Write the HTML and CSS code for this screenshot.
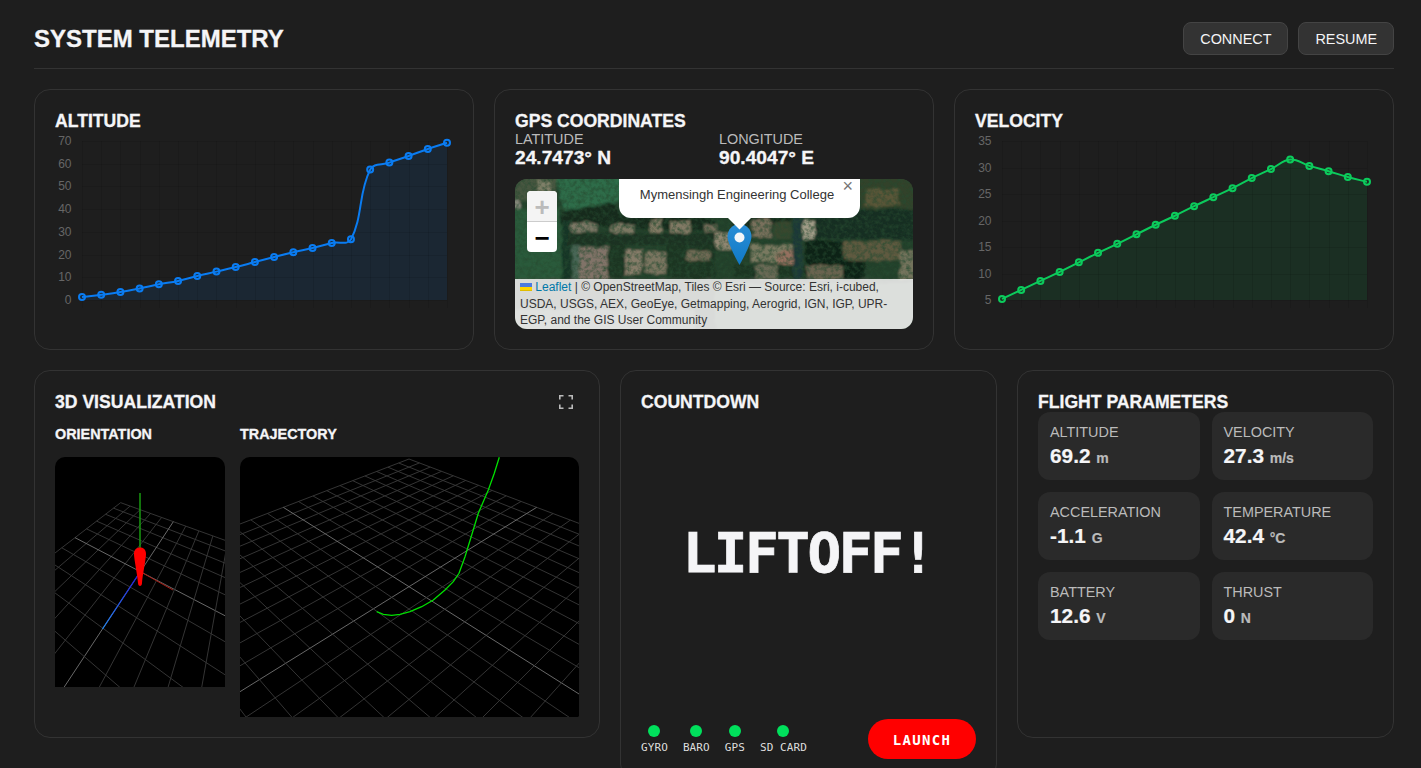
FILE: index.html
```html
<!DOCTYPE html>
<html lang="en">
<head>
    <meta charset="UTF-8">
    <title>System Telemetry</title>
    <link rel="stylesheet" href="styles.css">
</head>
<body>
    <header class="topbar">
        <h1>SYSTEM TELEMETRY</h1>
        <div class="topbar-actions">
            <button class="btn">CONNECT</button>
            <button class="btn">RESUME</button>
        </div>
    </header>

    <section class="row row-top">
        <div class="card">
            <h2>ALTITUDE</h2>
            <svg class="chart" id="altitude-chart" width="398" height="199"></svg>
        </div>

        <div class="card">
            <h2>GPS COORDINATES</h2>
            <div class="coords">
                <div>
                    <div class="coord-label">LATITUDE</div>
                    <div class="coord-value">24.7473° N</div>
                </div>
                <div>
                    <div class="coord-label">LONGITUDE</div>
                    <div class="coord-value">90.4047° E</div>
                </div>
            </div>
            <div class="map">
                <svg class="map-tiles" width="398" height="150" viewBox="0 0 398 150">
                    <defs>
                        <filter id="tile-rough" x="0" y="0" width="100%" height="100%">
                            <feTurbulence type="fractalNoise" baseFrequency="0.09" numOctaves="3" seed="11" result="warp"/>
                            <feDisplacementMap in="SourceGraphic" in2="warp" scale="6" xChannelSelector="R" yChannelSelector="G"/>
                            <feGaussianBlur stdDeviation="0.8"/>
                        </filter>
                        <filter id="tile-noise" x="0" y="0" width="100%" height="100%">
                            <feTurbulence type="fractalNoise" baseFrequency="0.24" numOctaves="3" seed="7"/>
                            <feColorMatrix values="0 0 0 0 0.02  0 0 0 0 0.07  0 0 0 0 0.03  2.2 0 0 0 -0.85"/>
                            <feGaussianBlur stdDeviation="0.6"/>
                        </filter>
                    </defs>
                    <g filter="url(#tile-rough)">
                        <rect x="-8" y="-8" width="414" height="166" fill="#24402c"/>
                        <rect x="-8" y="-8" width="50" height="30" fill="#46563f"/>
                        <rect x="22" y="2" width="14" height="10" fill="#7f7f68"/>
                        <rect x="-8" y="20" width="13" height="10" fill="#85877a"/>
                        <polygon points="40,-8 112,-8 108,20 78,38 48,30" fill="#2d6c48"/>
                        <polygon points="108,-8 200,-8 200,22 110,22" fill="#38553a"/>
                        <rect x="-8" y="30" width="56" height="72" fill="#2c5a3a"/>
                        <polygon points="45,32 95,24 110,38 180,36 200,42 200,52 45,46" fill="#14291b"/>
                        <rect x="47" y="42" width="9" height="60" fill="#193628"/>
                        <rect x="57" y="60" width="8" height="40" fill="#486656"/>
                        <rect x="56" y="44" width="26" height="9" fill="#7a7765"/>
                        <rect x="95" y="45" width="24" height="17" fill="#7c7863"/>
                        <rect x="135" y="40" width="12" height="20" fill="#807963"/>
                        <rect x="155" y="42" width="20" height="22" fill="#827a65"/>
                        <rect x="190" y="45" width="12" height="15" fill="#736d5a"/>
                        <rect x="52" y="54" width="150" height="12" fill="#1a3021"/>
                        <rect x="64" y="68" width="28" height="32" fill="#817368"/>
                        <rect x="110" y="71" width="17" height="24" fill="#867c69"/>
                        <rect x="130" y="72" width="21" height="23" fill="#7a7560"/>
                        <rect x="92" y="66" width="18" height="36" fill="#1b3422"/>
                        <rect x="152" y="66" width="48" height="36" fill="#1a3522"/>
                        <rect x="200" y="54" width="18" height="16" fill="#8f8671"/>
                        <rect x="172" y="72" width="22" height="9" fill="#6f6a54"/>
                        <rect x="218" y="38" width="58" height="10" fill="#182c1d"/>
                        <rect x="237" y="40" width="19" height="19" fill="#79705c"/>
                        <rect x="258" y="42" width="18" height="18" fill="#39472e"/>
                        <rect x="236" y="66" width="50" height="17" fill="#797961"/>
                        <rect x="262" y="72" width="20" height="13" fill="#94705f"/>
                        <rect x="218" y="86" width="70" height="16" fill="#1b3521"/>
                        <rect x="240" y="86" width="22" height="14" fill="#6b6b56"/>
                        <rect x="278" y="36" width="9" height="66" fill="#1d3738"/>
                        <rect x="288" y="42" width="18" height="18" fill="#a09b87"/>
                        <rect x="310" y="44" width="11" height="15" fill="#969e96"/>
                        <rect x="345" y="-8" width="61" height="38" fill="#31432a"/>
                        <rect x="350" y="10" width="34" height="17" fill="#5a5639"/>
                        <rect x="300" y="30" width="106" height="30" fill="#192f20"/>
                        <rect x="290" y="62" width="60" height="40" fill="#102317"/>
                        <rect x="328" y="62" width="58" height="19" fill="#5f5a40"/>
                        <rect x="385" y="72" width="21" height="30" fill="#73735c"/>
                        <rect x="292" y="86" width="36" height="14" fill="#69644f"/>
                        <rect x="-8" y="100" width="414" height="58" fill="#3f4c40"/>
                        <rect x="200" y="104" width="206" height="54" fill="#536053"/>
                        <rect x="-8" y="130" width="188" height="28" fill="#5e695e"/>
                    </g>
                    <rect width="398" height="100" filter="url(#tile-noise)" opacity="0.75"/>
                </svg>

                <svg class="marker" width="25" height="41" viewBox="0 0 25 41">
                    <defs>
                        <linearGradient id="marker-fill" x1="0" y1="0" x2="0" y2="1">
                            <stop offset="0" stop-color="#2a8ed6"/>
                            <stop offset="1" stop-color="#1079c6"/>
                        </linearGradient>
                    </defs>
                    <path d="M12.5 0C5.6 0 .5 5.6.5 12.5.5 20 12.5 41 12.5 41S24.500 20 24.500 12.500C24.500 5.600 19.400 0 12.500 0Z" fill="url(#marker-fill)"/>
                    <circle cx="12.500" cy="13.500" r="5" fill="#f4f6f8"/>
                </svg>

                <div class="zoom-ctrl">
                    <span class="zoom-btn zoom-off">+</span>
                    <span class="zoom-btn">−</span>
                </div>

                <div class="popup">
                    <span class="popup-close">×</span>
                    Mymensingh Engineering College
                    <span class="popup-tip"></span>
                </div>

                <div class="attribution">
                    <svg class="flag" width="12" height="8" viewBox="0 0 12 8"><rect width="12" height="4" fill="#4C7BE1"/><rect y="4" width="12" height="3" fill="#FFD500"/><rect y="7" width="12" height="1" fill="#E0BC00"/></svg>
                    <a href="#">Leaflet</a> | © OpenStreetMap, Tiles © Esri — Source: Esri, i-cubed, USDA, USGS, AEX, GeoEye, Getmapping, Aerogrid, IGN, IGP, UPR-EGP, and the GIS User Community
                </div>
            </div>
        </div>

        <div class="card">
            <h2>VELOCITY</h2>
            <svg class="chart" id="velocity-chart" width="398" height="199"></svg>
        </div>
    </section>

    <section class="row row-bottom">
        <div class="card card-viz">
            <div class="viz-head">
                <h2>3D VISUALIZATION</h2>
                <svg class="fullscreen" width="14" height="14" viewBox="0 0 14 14" fill="none" stroke="#bbb" stroke-width="1.600">
                    <path d="M.8 4.500V.8h3.700M9.500.8h3.700v3.700M13.200 9.500v3.700H9.500M4.500 13.200H.8V9.500"/>
                </svg>
            </div>
            <div class="viz-views">
                <div>
                    <h3>ORIENTATION</h3>
                    <svg class="scene" id="orientation-scene" width="170" height="230"></svg>
                </div>
                <div>
                    <h3>TRAJECTORY</h3>
                    <svg class="scene" id="trajectory-scene" width="339" height="260"></svg>
                </div>
            </div>
        </div>

        <div class="card card-countdown">
            <h2>COUNTDOWN</h2>
            <div class="countdown-text">LIFTOFF!</div>
            <div class="countdown-foot">
                <div class="status-list">
                    <div class="status"><span class="dot"></span>GYRO</div>
                    <div class="status"><span class="dot"></span>BARO</div>
                    <div class="status"><span class="dot"></span>GPS</div>
                    <div class="status"><span class="dot"></span>SD CARD</div>
                </div>
                <button class="launch">LAUNCH</button>
            </div>
        </div>

        <div class="card card-params">
            <h2>FLIGHT PARAMETERS</h2>
            <div class="params">
                <div class="param"><div class="param-label">ALTITUDE</div><div class="param-value">69.2 <span>m</span></div></div>
                <div class="param"><div class="param-label">VELOCITY</div><div class="param-value">27.3 <span>m/s</span></div></div>
                <div class="param"><div class="param-label">ACCELERATION</div><div class="param-value">-1.1 <span>G</span></div></div>
                <div class="param"><div class="param-label">TEMPERATURE</div><div class="param-value">42.4 <span>°C</span></div></div>
                <div class="param"><div class="param-label">BATTERY</div><div class="param-value">12.6 <span>V</span></div></div>
                <div class="param"><div class="param-label">THRUST</div><div class="param-value">0 <span>N</span></div></div>
            </div>
        </div>
    </section>

    <script src="telemetry.js"></script>
</body>
</html>
```

FILE: styles.css
```css
* {
    box-sizing: border-box;
}
html, body {
    height: 100%;
    overflow: hidden;
}
body {
    margin: 0;
    padding: 22px 27px 0 34px;
    background: #1e1e1e;
    color: #f5f5f7;
    font-family: 'Liberation Sans', Arial, sans-serif;
}
h1, h2, h3 {
    margin: 0;
    -webkit-text-stroke: 0.3px currentColor;
}
.topbar {
    display: flex;
    justify-content: space-between;
    align-items: center;
    padding-bottom: 13px;
    margin-bottom: 20px;
    border-bottom: 1px solid #333;
}
.topbar h1 {
    font-size: 24px;
    line-height: 33px;
}
.topbar-actions {
    display: flex;
    gap: 10px;
}
.btn {
    height: 33px;
    padding: 0 16px;
    background: #333;
    border: 1px solid #444;
    border-radius: 8px;
    color: #f5f5f7;
    font-family: inherit;
    font-size: 14.4px;
}
.row {
    display: grid;
    gap: 20px;
}
.row-top {
    grid-template-columns: repeat(3, 1fr);
    margin-bottom: 20px;
}
.row-bottom {
    grid-template-columns: 1.5fr 1fr 1fr;
    align-items: start;
}
.card {
    height: 261px;
    padding: 20px;
    background: #1e1e1e;
    border: 1px solid #333;
    border-radius: 16px;
}
.card h2 {
    padding-top: 1px;
    font-size: 17.6px;
    line-height: 20px;
}
.chart {
    display: block;
}
.chart text {
    fill: #666;
    font-size: 12px;
    text-anchor: end;
}

/* gps */
.coords {
    display: grid;
    grid-template-columns: 1fr 1fr;
    gap: 10px;
    margin-bottom: 10px;
}
.coord-label {
    color: #bbb;
    font-size: 14.4px;
    line-height: 16px;
}
.coord-value {
    font-size: 19.2px;
    font-weight: bold;
    line-height: 22px;
    -webkit-text-stroke: 0.3px currentColor;
}
.map {
    position: relative;
    height: 150px;
    border-radius: 12px;
    overflow: hidden;
    background: #2a4431;
}
.map-tiles {
    display: block;
}
.marker {
    position: absolute;
    left: 212px;
    top: 45px;
}
.zoom-ctrl {
    position: absolute;
    left: 12px;
    top: 12px;
    width: 30px;
    border-radius: 4px;
    overflow: hidden;
    background: #fff;
}
.zoom-btn {
    display: block;
    height: 30px;
    overflow: hidden;
    color: #000;
    font-size: 26px;
    font-weight: bold;
    line-height: 32px;
    text-align: center;
}
.zoom-off {
    height: 31px;
    background: #f4f4f4;
    border-bottom: 1px solid #ccc;
    color: #bbb;
}
.popup {
    position: absolute;
    left: 104px;
    top: 0;
    width: 241px;
    height: 39px;
    padding: 7px 5px 0 0;
    background: #fff;
    border-radius: 0 0 12px 12px;
    color: #333;
    font-size: 13px;
    line-height: 18px;
    text-align: center;
}
.popup-close {
    position: absolute;
    right: 7px;
    top: 0;
    color: #757575;
    font-size: 18px;
    line-height: 15px;
}
.popup-tip {
    position: absolute;
    left: 112px;
    bottom: -8px;
    width: 17px;
    height: 17px;
    background: #fff;
    transform: rotate(45deg);
}
.attribution {
    position: absolute;
    left: 0;
    right: 0;
    bottom: 0;
    height: 50px;
    padding: 0 5px;
    background: rgba(255, 255, 255, 0.8);
    color: #333;
    font-size: 12px;
    line-height: 16.5px;
}
.attribution a {
    color: #0078a8;
    text-decoration: none;
}

/* 3d */
.card-viz {
    height: 368px;
}
.viz-head {
    display: flex;
    justify-content: space-between;
    align-items: center;
    padding-right: 6px;
    margin-bottom: 14px;
}
.viz-views {
    display: flex;
    gap: 15px;
}
.viz-views h3 {
    margin-bottom: 14px;
    font-size: 14.4px;
    line-height: 17px;
}
.scene {
    display: block;
    background: #000;
    border-radius: 10px 10px 0 0;
}

/* countdown */
.card-countdown {
    display: flex;
    flex-direction: column;
    height: 410px;
}
.countdown-text {
    flex: 1;
    display: flex;
    align-items: center;
    justify-content: center;
    padding: 0 2px 26px 0;
    font-family: 'DejaVu Sans Mono', monospace;
    font-size: 56px;
    font-weight: bold;
    letter-spacing: -2.5px;
    -webkit-text-stroke: 0.7px currentColor;
}
.countdown-foot {
    display: flex;
    justify-content: space-between;
    align-items: center;
}
.status-list {
    display: flex;
    gap: 15px;
}
.status {
    display: flex;
    flex-direction: column;
    align-items: center;
    gap: 4px;
    color: #ddd;
    font-family: 'DejaVu Sans Mono', monospace;
    font-size: 11px;
    letter-spacing: 0.1px;
    line-height: 13px;
}
.dot {
    width: 12px;
    height: 12px;
    border-radius: 50%;
    background: #00e05c;
}
.launch {
    width: 108px;
    height: 40px;
    padding: 1px 0 0;
    background: #f00;
    border: none;
    border-radius: 20px;
    color: #fff;
    font-family: 'DejaVu Sans Mono', monospace;
    font-size: 14px;
    font-weight: bold;
    letter-spacing: 1.3px;
}

/* params */
.card-params {
    height: 368px;
}
.params {
    display: grid;
    grid-template-columns: 1fr 1fr;
    gap: 12px;
}
.param {
    height: 68px;
    padding: 12px;
    background: #2a2a2a;
    border-radius: 12px;
}
.param-label {
    color: #bbb;
    font-size: 14.4px;
    line-height: 16px;
}
.param-value {
    margin-top: 3px;
    font-size: 20.8px;
    font-weight: bold;
    line-height: 26px;
    -webkit-text-stroke: 0.2px currentColor;
}
.param-value span {
    color: #bbb;
    font-size: 14px;
}
```

FILE: telemetry.js
```js
var NS = 'http://www.w3.org/2000/svg';

function add(svg, tag, attrs, text) {
    var el = document.createElementNS(NS, tag);
    for (var k in attrs) el.setAttribute(k, attrs[k]);
    if (text != null) el.textContent = text;
    svg.appendChild(el);
    return el;
}

// same control points chart.js uses for tension 0.4
function smoothPath(pts) {
    var t = 0.4, ctrl = [];
    for (var i = 0; i < pts.length; i++) {
        var p = pts[i], a = pts[i - 1] || p, b = pts[i + 1] || p;
        var d01 = Math.hypot(p[0] - a[0], p[1] - a[1]);
        var d12 = Math.hypot(b[0] - p[0], b[1] - p[1]);
        var sum = d01 + d12 || 1;
        var fa = t * d01 / sum, fb = t * d12 / sum;
        ctrl.push({
            prev: [p[0] - fa * (b[0] - a[0]), p[1] - fa * (b[1] - a[1])],
            next: [p[0] + fb * (b[0] - a[0]), p[1] + fb * (b[1] - a[1])]
        });
    }
    var d = 'M' + pts[0][0] + ' ' + pts[0][1];
    for (var j = 1; j < pts.length; j++) {
        d += 'C' + ctrl[j - 1].next.join(' ') + ' ' + ctrl[j].prev.join(' ') + ' ' + pts[j].join(' ');
    }
    return d;
}

function drawChart(id, cfg) {
    var svg = document.getElementById(id);
    var left = 27, right = 392, top = 10, bottom = 169;
    var n = cfg.data.length;
    var stepX = (right - left) / (n - 1);
    var yOf = function (v) { return bottom - (v - cfg.min) / (cfg.max - cfg.min) * (bottom - top); };

    var pts = cfg.data.map(function (v, i) { return [left + i * stepX, yOf(v)]; });
    var line = smoothPath(pts);

    add(svg, 'path', { d: line + 'L' + right + ' ' + bottom + 'L' + left + ' ' + bottom + 'Z', fill: cfg.color, 'fill-opacity': 0.1 });

    for (var i = 0; i < n; i++) {
        var x = Math.round(left + i * stepX) + 0.5;
        add(svg, 'line', { x1: x, x2: x, y1: top, y2: bottom + 8, stroke: 'rgba(0,0,0,0.09)' });
    }
    for (var v = cfg.min; v <= cfg.max; v += cfg.step) {
        var y = Math.round(yOf(v)) + 0.5;
        add(svg, 'line', { x1: left, x2: right, y1: y, y2: y, stroke: 'rgba(0,0,0,0.09)' });
        add(svg, 'text', { x: 16.5, y: yOf(v) + 4 }, v);
    }

    add(svg, 'path', { d: line, fill: 'none', stroke: cfg.color, 'stroke-width': 2 });
    pts.forEach(function (p) {
        add(svg, 'circle', { cx: p[0], cy: p[1], r: 3, fill: cfg.color, 'fill-opacity': 0.1, stroke: cfg.color, 'stroke-width': 2 });
    });
}

// projective map from the unit square onto a quad (f, q, c, p)
function quadProjection(f, q, c, p) {
    var sx = f[0] - q[0] + c[0] - p[0], sy = f[1] - q[1] + c[1] - p[1];
    var dx1 = q[0] - c[0], dx2 = p[0] - c[0], dy1 = q[1] - c[1], dy2 = p[1] - c[1];
    var det = dx1 * dy2 - dx2 * dy1;
    var g = (sx * dy2 - dx2 * sy) / det, h = (dx1 * sy - sx * dy1) / det;
    var a = q[0] - f[0] + g * q[0], b = p[0] - f[0] + h * p[0];
    var d = q[1] - f[1] + g * q[1], e = p[1] - f[1] + h * p[1];
    return function (u, v) {
        var w = g * u + h * v + 1;
        return [(a * u + b * v + f[0]) / w, (d * u + e * v + f[1]) / w];
    };
}

function drawGrid(svg, half, project) {
    for (var i = -half; i <= half; i++) {
        var color = i === 0 ? '#747474' : '#3a3a3a';
        var a = project(i, -half), b = project(i, half);
        add(svg, 'line', { x1: a[0], y1: a[1], x2: b[0], y2: b[1], stroke: color, 'stroke-width': 0.9 });
        a = project(-half, i); b = project(half, i);
        add(svg, 'line', { x1: a[0], y1: a[1], x2: b[0], y2: b[1], stroke: color, 'stroke-width': 0.9 });
    }
}

function sceneProjection(half, ox, oy, f, q, c, p) {
    var toLocal = function (z) { return [z[0] / 3 + ox, z[1] / 3 + oy]; };
    var map = quadProjection(toLocal(f), toLocal(q), toLocal(c), toLocal(p));
    return function (x, z) { return map((x + half) / half, (z + half) / half); };
}

function drawOrientation() {
    var svg = document.getElementById('orientation-scene');
    var project = sceneProjection(5, 30 - 55, 370 - 457, [272, 398], [430, 455], [331, 605], [135, 503]);
    drawGrid(svg, 5, project);
    var c = project(0, 0);

    var defs = add(svg, 'defs', {});
    var grad = add(defs, 'linearGradient', { id: 'z-axis', gradientUnits: 'userSpaceOnUse', x1: c[0], y1: c[1], x2: 47, y2: 172 });
    add(grad, 'stop', { offset: 0, 'stop-color': '#2414d8' });
    add(grad, 'stop', { offset: 1, 'stop-color': '#1f86f0' });

    add(svg, 'line', { x1: c[0], y1: c[1], x2: 47.5, y2: 172, stroke: 'url(#z-axis)', 'stroke-width': 1.300 });
    add(svg, 'line', { x1: c[0], y1: c[1], x2: 118, y2: 133, stroke: '#a81c14', 'stroke-width': 1 });
    add(svg, 'line', { x1: 85, y1: 36, x2: 85, y2: c[1], stroke: '#189a10', 'stroke-width': 1.500 });
    add(svg, 'path', { d: 'M79 97C79 92 82 90.500 85 90.500S91 92 91 97C91 102 87.500 118 87 126C87 130 83 130 83 126C82.500 118 79 102 79 97Z', fill: '#f00' });
}

function drawTrajectory() {
    var svg = document.getElementById('trajectory-scene');
    var project = sceneProjection(10, 235 - 240, 380 - 457, [522, 237], [905, 382], [522, 620], [145, 382]);
    drawGrid(svg, 10, project);

    var zoomed = [[425, 695], [445, 703], [470, 706], [495, 703], [525, 695], [560, 680], [595, 660], [630, 630], [655, 605], [672, 580], [690, 530], [710, 465], [730, 400], [760, 330], [778, 280], [793, 232]];
    var pts = zoomed.map(function (p) { return (p[0] / 3 - 5).toFixed(1) + ',' + (p[1] / 3 - 77).toFixed(1); });
    add(svg, 'polyline', { points: pts.join(' '), fill: 'none', stroke: '#00e000', 'stroke-width': 1.300 });
}

drawChart('altitude-chart', {
    color: '#0a7cf2', min: 0, max: 70, step: 10,
    data: [1.3, 2.3, 3.5, 5.1, 6.9, 8.4, 10.6, 12.5, 14.5, 16.7, 18.9, 21, 22.9, 25.1, 26.7, 57.4, 60.5, 63.4, 66.5, 69.2]
});
drawChart('velocity-chart', {
    color: '#0ccb5c', min: 5, max: 35, step: 5,
    data: [5.2, 6.9, 8.6, 10.3, 12.1, 13.9, 15.6, 17.4, 19.2, 20.9, 22.7, 24.4, 26.1, 28, 29.7, 31.5, 30.3, 29.3, 28.2, 27.3]
});
drawOrientation();
drawTrajectory();
```
